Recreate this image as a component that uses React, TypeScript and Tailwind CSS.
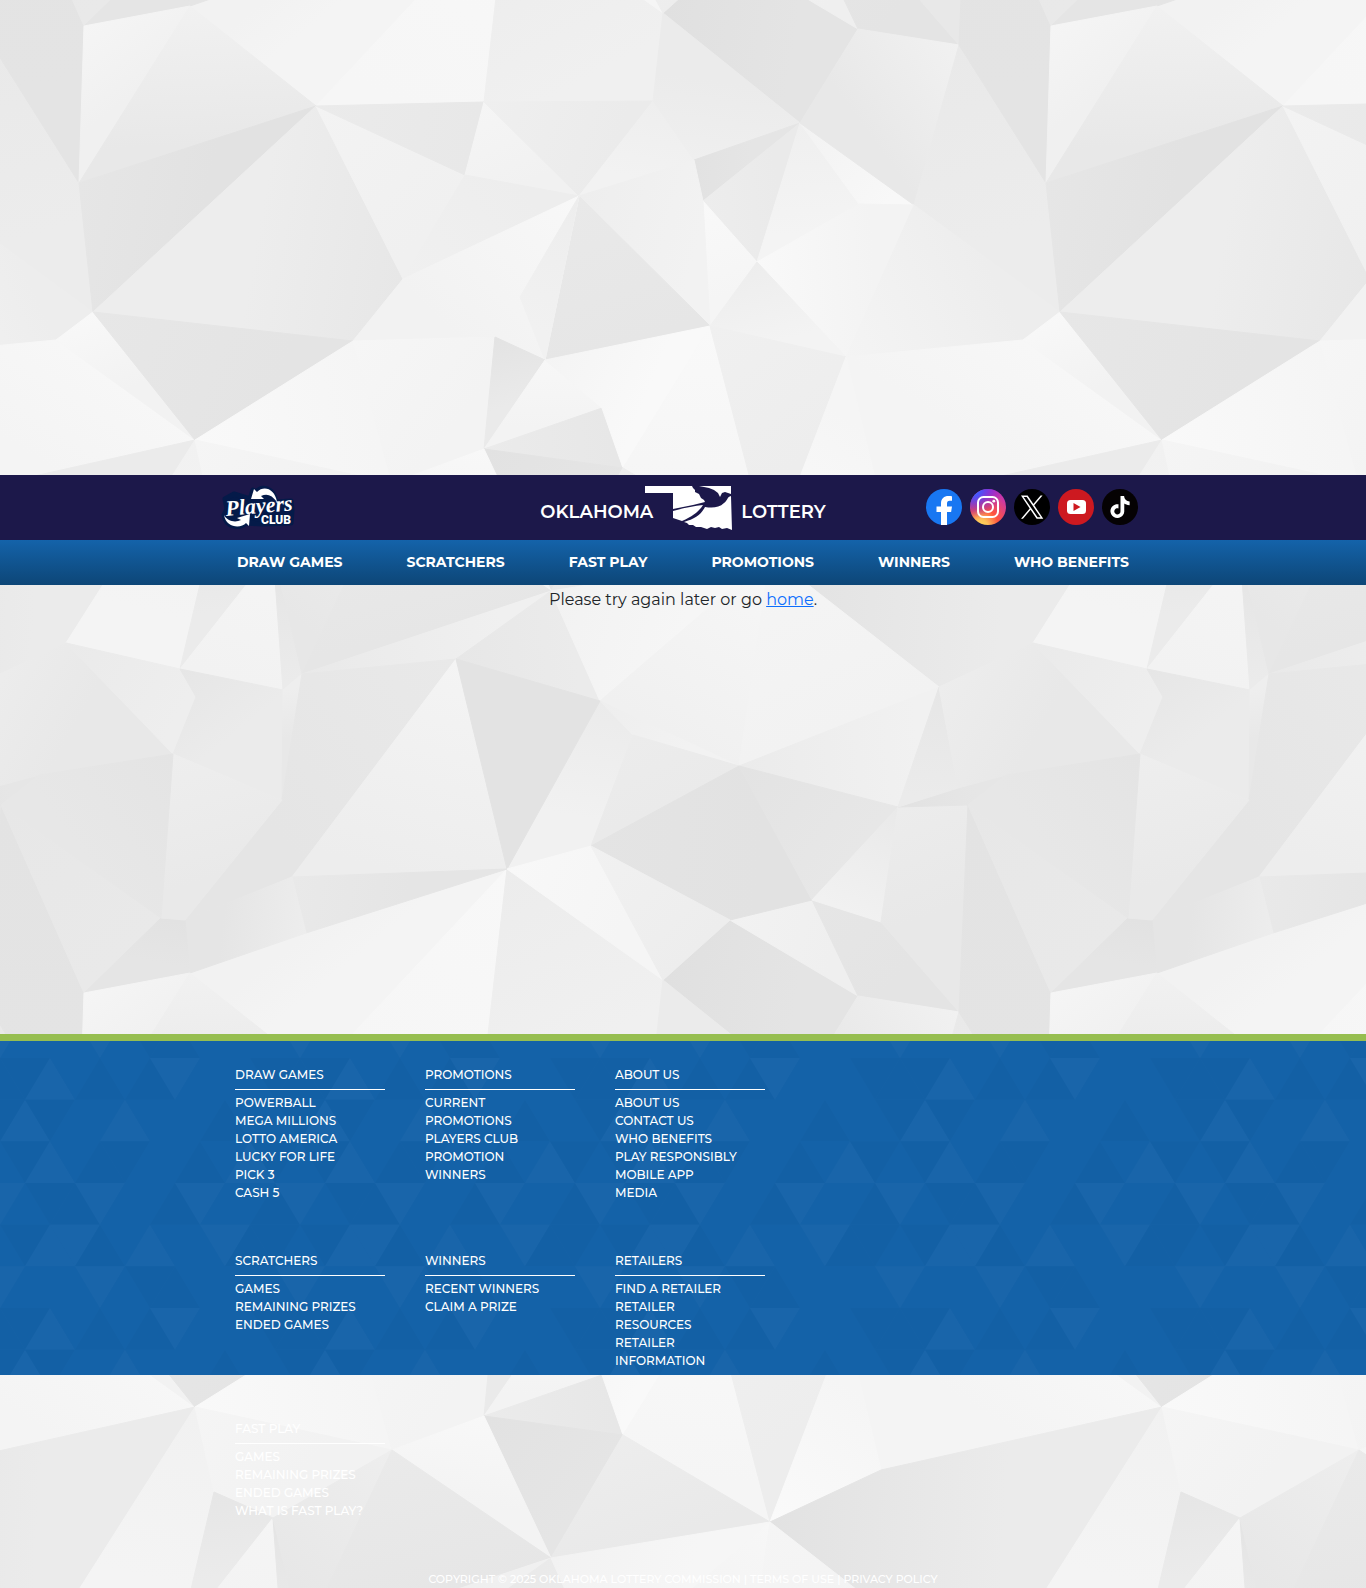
import React from "react";

type Point = [number, number];

const TILE = 967;

/* Corner points of the low-poly backdrop, in tile coordinates. */
const P: Record<string, Point> = {
  A: [84, 26], B: [190, 6], C: [79, 183], D: [316, 106], E: [93, 312], F: [484, 102],
  G: [465, 175], H: [579, 196], I: [403, 279], J: [353, 341], K: [195, 440], L: [545, 360],
  M: [495, 337], N: [484, 449], O: [602, 408], P: [623, 468], Q: [56, 340], S: [663, 13],
  T: [653, 101], U: [694, 160], V: [703, 201], W: [800, 123], X: [858, 29], Y: [959, 45],
  a: [757, 262], b: [914, 205], c: [710, 326], d: [846, 357], z: [859, 204],
  C2: [1046, 183], E2: [1060, 312], Q2: [1023, 340], K2: [1162, 440],
  y: [881, 503], m2: [770, 555], R3: [214, 525], Q3: [273, 551], x: [392, 483],
  e: [66, 643], f: [180, 669], g: [283, 690], h: [302, 674], i: [196, 697], j: [173, 754],
  k: [282, 800], l: [456, 659], m: [551, 591], n: [600, 701], o: [507, 869], p: [591, 846],
  q: [292, 877], r: [306, 933], s: [185, 920], t: [161, 918], v: [1, 805], w: [39, 775],
  n2: [739, 766], o2: [939, 687], p2: [898, 807], q2: [812, 900], r2: [730, 920],
  s2: [958, 788], t2: [881, 922], u: [633, 735], e2: [1033, 643], j2: [1140, 754],
  w2: [1006, 775], v2: [968, 805],
  A9: [84, 993], B9: [190, 973], D9: [316, 1073], F9: [484, 1069], S9: [663, 980],
  T9: [653, 1068], W9: [800, 1090], X9: [858, 996], Y9: [959, 1012], C9: [79, 1150],
  Y8: [-8, 1012], g1: [520, 297],
};

/* Each facet: corner names, shade at the first corner, shade at the far side. */
const FACETS: [string, string, string][] = [
  ["v Y8 C9 A9", "#e3e3e3", "#e4e4e4"],
  ["A B C", "#f5f5f5", "#f0f0f0"],
  ["v t A9", "#e7e7e7", "#e9e9e9"],
  ["B D C", "#f1f1f1", "#e8e8e8"],
  ["C D E", "#e6e6e6", "#e2e2e2"],
  ["I D E J", "#e7e7e7", "#ededed"],
  ["D G I", "#f3f3f3", "#f0f0f0"],
  ["D F G", "#ebebeb", "#e8e8e8"],
  ["F G H", "#f5f5f5", "#f1f1f1"],
  ["I G H", "#f0f0f0", "#ededed"],
  ["r B9 D9 o", "#f2f2f2", "#f4f4f4"],
  ["o D9 F9", "#f8f8f8", "#f6f6f6"],
  ["o F9 T9 S9", "#ececec", "#f0f0f0"],
  ["F T H", "#efefef", "#ebebeb"],
  ["T U H", "#eeeeee", "#f2f2f2"],
  ["U T S W", "#efefef", "#ebebeb"],
  ["S9 r2 X9 W9", "#e0e0e0", "#e4e4e4"],
  ["r2 q2 X9", "#f2f2f2", "#efefef"],
  ["q2 t2 Y9 X9", "#e6e6e6", "#e4e4e4"],
  ["U V W", "#e2e2e2", "#e5e5e5"],
  ["V W a", "#ededed", "#eaeaea"],
  ["W a z", "#efefef", "#f4f4f4"],
  ["W z b", "#f2f2f2", "#f8f8f8"],
  ["Y X W b", "#f1f1f1", "#e8e8e8"],
  ["Y C2 E2 b", "#e9e9e9", "#ececec"],
  ["a z b d", "#f9f9f9", "#f3f3f3"],
  ["d b E2 Q2", "#f4f4f4", "#ededed"],
  ["V a c", "#f9f9f9", "#f5f5f5"],
  ["H U V c", "#eeeeee", "#f2f2f2"],
  ["H c L", "#e9e9e9", "#e6e6e6"],
  ["H I J M L", "#f8f8f8", "#f2f2f2"],
  ["H g1 L", "#ededed", "#f1f1f1"],
  ["a c d", "#ededed", "#f3f3f3"],
  ["E Q K", "#f8f8f8", "#f2f2f2"],
  ["E J K", "#e7e7e7", "#e4e4e4"],
  ["Q2 K2 y d", "#f7f7f7", "#f4f4f4"],
  ["K J x", "#f9f9f9", "#f5f5f5"],
  ["J x N M", "#f6f6f6", "#f3f3f3"],
  ["M L N", "#e3e3e3", "#eaeaea"],
  ["L O N", "#f7f7f7", "#f3f3f3"],
  ["N O P", "#ebebeb", "#e7e7e7"],
  ["L c P O", "#f4f4f4", "#f9f9f9"],
  ["c P m2", "#f9f9f9", "#f5f5f5"],
  ["c m2 d", "#f0f0f0", "#ededed"],
  ["m2 d y", "#fafafa", "#f5f5f5"],
  ["N P m", "#e2e2e2", "#e5e5e5"],
  ["N m x", "#f8f8f8", "#f3f3f3"],
  ["P m m2", "#ededed", "#e9e9e9"],
  ["m2 y K2 e2 o2", "#e2e2e2", "#ebebeb"],
  ["K R3 f e", "#f1f1f1", "#f4f4f4"],
  ["K x Q3 R3", "#f5f5f5", "#f2f2f2"],
  ["R3 f Q3", "#e6e6e6", "#ebebeb"],
  ["Q3 f g", "#f5f5f5", "#f2f2f2"],
  ["Q3 g h", "#e4e4e4", "#ebebeb"],
  ["x Q3 h", "#eeeeee", "#e7e7e7"],
  ["x h m", "#eaeaea", "#e6e6e6"],
  ["h l m", "#e9e9e9", "#f0f0f0"],
  ["l m n", "#e7e7e7", "#ebebeb"],
  ["m m2 n", "#f2f2f2", "#f6f6f6"],
  ["m2 n n2", "#f7f7f7", "#f0f0f0"],
  ["m2 n2 o2", "#f5f5f5", "#f2f2f2"],
  ["n2 o2 p2", "#ebebeb", "#f1f1f1"],
  ["n o p u", "#ebebeb", "#f1f1f1"],
  ["n n2 u", "#eeeeee", "#f2f2f2"],
  ["u n2 p", "#ececec", "#eaeaea"],
  ["p n2 q2 r2", "#e4e4e4", "#e2e2e2"],
  ["n2 p2 q2", "#e3e3e3", "#e7e7e7"],
  ["p2 q2 t2", "#e9e9e9", "#f1f1f1"],
  ["p2 v2 Y9 t2", "#ececec", "#e8e8e8"],
  ["p2 s2 w2 v2", "#e2e2e2", "#e6e6e6"],
  ["o2 p2 s2", "#e6e6e6", "#ebebeb"],
  ["o2 s2 w2 j2 e2", "#ededed", "#e8e8e8"],
  ["e f i j", "#eaeaea", "#eeeeee"],
  ["f g k j i", "#e6e6e6", "#ebebeb"],
  ["g h k", "#eeeeee", "#e8e8e8"],
  ["l h k s q", "#e9e9e9", "#e5e5e5"],
  ["l q o", "#f4f4f4", "#ededed"],
  ["l o n", "#e3e3e3", "#e3e3e3"],
  ["q o r", "#e9e9e9", "#e5e5e5"],
  ["r q s B9", "#ededed", "#e5e5e5"],
  ["t s B9 A9", "#e2e2e2", "#e5e5e5"],
  ["j k s t", "#eeeeee", "#e9e9e9"],
  ["j t v w", "#e4e4e4", "#e7e7e7"],
  ["o p S9", "#f8f8f8", "#f5f5f5"],
  ["p r2 S9", "#f1f1f1", "#ededed"],
];

const SHIFTS: Point[] = [-TILE, 0, TILE].flatMap((x) =>
  [-TILE, 0, TILE].map((y): Point => [x, y]),
);

function PolyBackdrop() {
  return (
    <svg className="absolute inset-0 h-full w-full" aria-hidden="true">
      <defs>
        {FACETS.map(([names, from, to], n) => {
          const pts = names.split(" ").map((k) => P[k]);
          const rest = pts.slice(1);
          const mx = rest.reduce((t, p) => t + p[0], 0) / rest.length;
          const my = rest.reduce((t, p) => t + p[1], 0) / rest.length;
          return (
            <linearGradient key={n} id={`shade${n}`} gradientUnits="userSpaceOnUse" x1={pts[0][0]} y1={pts[0][1]} x2={mx} y2={my}>
              <stop offset="0" stopColor={from} />
              <stop offset="1" stopColor={to} />
            </linearGradient>
          );
        })}
        <g id="facets">
          {FACETS.map(([names], n) => (
            <polygon
              key={n}
              points={names.split(" ").map((k) => P[k].join(",")).join(" ")}
              fill={`url(#shade${n})`}
              stroke={`url(#shade${n})`}
              strokeWidth="1"
              strokeLinejoin="round"
            />
          ))}
        </g>
        <pattern id="poly" width={TILE} height={TILE} patternUnits="userSpaceOnUse">
          <rect width={TILE} height={TILE} fill="#efefef" />
          {SHIFTS.map(([x, y]) => (
            <use key={`${x},${y}`} href="#facets" x={x} y={y} />
          ))}
        </pattern>
      </defs>
      <rect width="100%" height="100%" fill="url(#poly)" />
    </svg>
  );
}

/* l = light, m = middle, d = dark; pairs of (up, down) triangles along a row. */
const ROWS = ["ddlmdmdlmmmd", "ldmmlmmmdmmd", "mdlmddmmdmld", "mddlmmdlmmdl", "mdlldmlmmldd", "mmmlmddmmmml"];
const SHADES: Record<string, string> = { l: "#1965aa", m: "#1462a8", d: "#1360a5" };
const BAND = 300;

function TriangleBackdrop() {
  const rowH = 125 / 3;
  return (
    <svg className="absolute inset-0 h-full w-full" aria-hidden="true">
      <defs>
        <pattern id="triangles" width={BAND} height="250" y="17" patternUnits="userSpaceOnUse">
          <rect width={BAND} height="250" fill="#1462a8" />
          {ROWS.flatMap((row, r) =>
            row.split("").flatMap((s, c) =>
              [-BAND, 0, BAND].map((wrap) => {
                const apex = (c >> 1) * 50 + (r % 2) * 25 + wrap;
                const top = r * rowH;
                const up = `${apex},${top} ${apex - 25},${top + rowH} ${apex + 25},${top + rowH}`;
                const down = `${apex},${top} ${apex + 50},${top} ${apex + 25},${top + rowH}`;
                return <polygon key={`${r}-${c}-${wrap}`} points={c % 2 ? down : up} fill={SHADES[s]} />;
              }),
            ),
          )}
        </pattern>
      </defs>
      <rect width="100%" height="100%" fill="url(#triangles)" />
    </svg>
  );
}

function PlayersClubLogo() {
  return (
    <svg width="74" height="46" viewBox="0 0 74 46" role="img" aria-label="Players Club" className="overflow-visible">
      <path
        fill="#041a49"
        stroke="#041a49"
        strokeWidth="5"
        strokeLinejoin="round"
        d="M28 14 L31 5 L34 7 C40 0 52 3 54 17 L69 16 L70 25 L69 38 L40 39 L24 38 C19 44 4 43 2 30 L5 24 L3 14 L12 9 Z"
      />
      <g fill="#ffffff" aria-hidden="true">
        <path d="M29 14 L32 4 L35 7 C42 0 53 4 55 17 C50 10 45 8 39 11 L42 14 Z" />
        <path d="M2 30 C4 43 19 44 24 38 L27 41 L28 29 L15 33 L19 35 C13 38 5 36 2 30 Z" />
        <text x="4" y="31" fontSize="22" fontWeight="700" fontStyle="italic" transform="rotate(-5 4 31)" className="font-['Liberation_Serif',serif]">
          Players
        </text>
        <text x="39" y="39" fontSize="12" fontWeight="900" className="font-[Roboto,sans-serif]">
          CLUB
        </text>
      </g>
    </svg>
  );
}

function StateMap() {
  return (
    <svg width="88" height="46" viewBox="0 0 88 46" aria-hidden="true">
      <path
        fill="#ffffff"
        d="M0 1 H47 L48 3 L50 5 L50 7 L54 9 L56 13 L59 15 L60 17 L48 20 L28 24 V8 H0 Z
           M54 1 H86 L86 9 L83 8 L80 7 L77 8 L75 12 L73 8 L69 5 L64 3 Z
           M28 26 C38 23 49 21 58 20 C55 25 49 31 37 36 L31 34 L28 33 Z
           M86 11 L87 45 L82 43 L77 44 L74 42 L70 43 L66 42 L62 44 L59 43 L56 42 L51 42 L48 40 L44 40 L42 38 L39 37 C49 34 56 30 60 22 C67 23 74 23 79 18 C83 15 82 12 86 11 Z"
      />
    </svg>
  );
}

function SocialIcons() {
  return (
    <div className="flex items-center gap-2">
      <a href="#facebook" aria-label="Facebook">
        <svg width="36" height="36" viewBox="0 0 36 36" className="block">
          <circle cx="18" cy="18" r="18" fill="#1877f2" />
          <path fill="#fff" d="M15 36V23H10.500v-5.500H15v-3C15 9.500 18 7 22.500 7c1.500 0 3 .2 3.500.3v4.500h-2.200c-2.200 0-2.800 1.300-2.800 2.800v2.900h5l-.9 5.500H21v13a18 18 0 0 1-6 0Z" />
        </svg>
      </a>
      <a href="#instagram" aria-label="Instagram">
        <svg width="36" height="36" viewBox="0 0 36 36" className="block">
          <defs>
            <radialGradient id="igWarm" cx="0.3" cy="1.05" r="1">
              <stop offset="0" stopColor="#fd5" />
              <stop offset="0.2" stopColor="#fdc25a" />
              <stop offset="0.5" stopColor="#ff543e" />
              <stop offset="1" stopColor="#c837ab" />
            </radialGradient>
            <radialGradient id="igCool" cx="0.1" cy="0" r="0.8">
              <stop offset="0.2" stopColor="#3f5cff" />
              <stop offset="1" stopColor="#6600ff" stopOpacity="0" />
            </radialGradient>
          </defs>
          <circle cx="18" cy="18" r="18" fill="url(#igWarm)" />
          <circle cx="18" cy="18" r="18" fill="url(#igCool)" />
          <g fill="none" stroke="#fff" strokeWidth="2">
            <rect x="8" y="8" width="20" height="20" rx="5.500" />
            <circle cx="18" cy="18" r="5" />
          </g>
          <circle cx="23.800" cy="12.200" r="1.400" fill="#fff" />
        </svg>
      </a>
      <a href="#x" aria-label="X">
        <svg width="36" height="36" viewBox="0 0 36 36" className="block">
          <circle cx="18" cy="18" r="18" fill="#000" />
          <path
            transform="translate(7 6.500) scale(0.930 0.970)"
            fill="#fff"
            d="M14.258 10.152 23.176 0h-2.113l-7.747 8.813L7.133 0H0l9.352 13.328L0 23.973h2.113l8.176-9.309 6.531 9.309h7.133zm-2.895 3.293-.949-1.328L2.875 1.560h3.246l6.086 8.523.945 1.328 7.910 11.078h-3.246z"
          />
        </svg>
      </a>
      <a href="#youtube" aria-label="YouTube">
        <svg width="36" height="36" viewBox="0 0 36 36" className="block">
          <circle cx="18" cy="18" r="18" fill="#cd1920" />
          <rect x="9" y="11" width="19" height="14" rx="3.500" fill="#fff" />
          <path d="M15.500 14v8l7-4Z" fill="#cd1920" />
        </svg>
      </a>
      <a href="#tiktok" aria-label="TikTok">
        <svg width="36" height="36" viewBox="0 0 36 36" className="block">
          <circle cx="18" cy="18" r="18" fill="#050203" />
          <path
            transform="translate(7 7) scale(0.920)"
            fill="#fff"
            d="M12.525.020c1.310-.020 2.610-.010 3.910-.020.080 1.530.630 3.090 1.750 4.170 1.120 1.110 2.700 1.620 4.240 1.790v4.030c-1.440-.050-2.890-.350-4.200-.970-.570-.260-1.100-.590-1.620-.930-.010 2.920.010 5.840-.020 8.750-.080 1.400-.540 2.790-1.350 3.940-1.310 1.920-3.580 3.170-5.910 3.210-1.430.080-2.860-.310-4.080-1.030-2.020-1.190-3.440-3.370-3.650-5.710-.020-.500-.030-1-.010-1.490.180-1.900 1.120-3.720 2.580-4.960 1.660-1.440 3.980-2.130 6.150-1.720.020 1.480-.040 2.960-.040 4.440-.990-.320-2.150-.230-3.020.370-.630.410-1.110 1.040-1.360 1.750-.210.510-.150 1.070-.140 1.610.240 1.640 1.820 3.020 3.500 2.870 1.120-.010 2.190-.660 2.770-1.610.190-.330.400-.670.410-1.060.100-1.790.060-3.570.070-5.360.010-4.030-.010-8.050.020-12.070z"
          />
        </svg>
      </a>
    </div>
  );
}

const NAV = ["Draw Games", "Scratchers", "Fast Play", "Promotions", "Winners", "Who Benefits"];

const SECTIONS: { title: string; links: string[] }[] = [
  { title: "Draw Games", links: ["Powerball", "Mega Millions", "Lotto America", "Lucky for Life", "Pick 3", "Cash 5"] },
  { title: "Promotions", links: ["Current Promotions", "Players Club", "Promotion Winners"] },
  { title: "About Us", links: ["About Us", "Contact Us", "Who Benefits", "Play Responsibly", "Mobile App", "Media"] },
  { title: "Scratchers", links: ["Games", "Remaining Prizes", "Ended Games"] },
  { title: "Winners", links: ["Recent Winners", "Claim a Prize"] },
  { title: "Retailers", links: ["Find a Retailer", "Retailer Resources", "Retailer Information"] },
  { title: "Fast Play", links: ["Games", "Remaining Prizes", "Ended Games", "What is Fast Play?"] },
];

export default function App() {
  return (
    <div className="relative flex min-h-screen flex-col pt-[475px] font-[Montserrat,Inter,sans-serif] text-[#212529]">
      <PolyBackdrop />
      <header className="relative">
        <div className="bg-[#1c184a]">
          <div className="mx-auto grid h-[65px] max-w-[926px] grid-cols-[1fr_auto_1fr] items-center">
            <a href="#players-club" className="justify-self-start pl-0.5">
              <PlayersClubLogo />
            </a>
            <a href="#home" className="flex items-center text-lg leading-6 font-semibold text-white">
              <span className="-mr-2 pt-2">OKLAHOMA</span>
              <StateMap />
              <span className="pt-2 pl-2">LOTTERY</span>
            </a>
            <div className="justify-self-end pr-2 pb-px">
              <SocialIcons />
            </div>
          </div>
        </div>
        <nav className="bg-linear-to-b from-[#1463aa] to-[#0d4677]">
          <ul className="mx-auto flex h-[45px] max-w-[924px] items-center justify-between px-4 pb-0.5 text-sm leading-5 font-bold text-white uppercase">
            {NAV.map((item) => (
              <li key={item}>
                <a href="#nav">{item}</a>
              </li>
            ))}
          </ul>
        </nav>
      </header>
      <main className="relative h-[449px] pt-[3px] text-center text-base leading-6">
        <p>
          Please try again later or go{" "}
          <a href="#home" className="text-[#0d6efd] underline">
            home
          </a>
          .
        </p>
      </main>
      <footer className="relative h-[341px] border-t-[7px] border-[#96be50] text-white uppercase">
        <TriangleBackdrop />
        <div className="relative mx-auto grid max-w-[924px] grid-cols-[repeat(3,150px)] gap-x-10 gap-y-[50px] px-[14px] pt-[25px] text-xs leading-[18px] font-medium">
          {SECTIONS.map(({ title, links }) => (
            <section key={title}>
              <h2 className="border-b border-white pb-[5px]">{title}</h2>
              <ul className="pt-1 pr-5">
                {links.map((link) => (
                  <li key={link}>
                    <a href="#link">{link}</a>
                  </li>
                ))}
              </ul>
            </section>
          ))}
        </div>
        <p className="relative pt-[51px] text-center text-[11px] leading-4 font-medium">
          Copyright © 2025 Oklahoma Lottery Commission | <a href="#terms">Terms of Use</a> | <a href="#privacy">Privacy Policy</a>
        </p>
      </footer>
    </div>
  );
}
